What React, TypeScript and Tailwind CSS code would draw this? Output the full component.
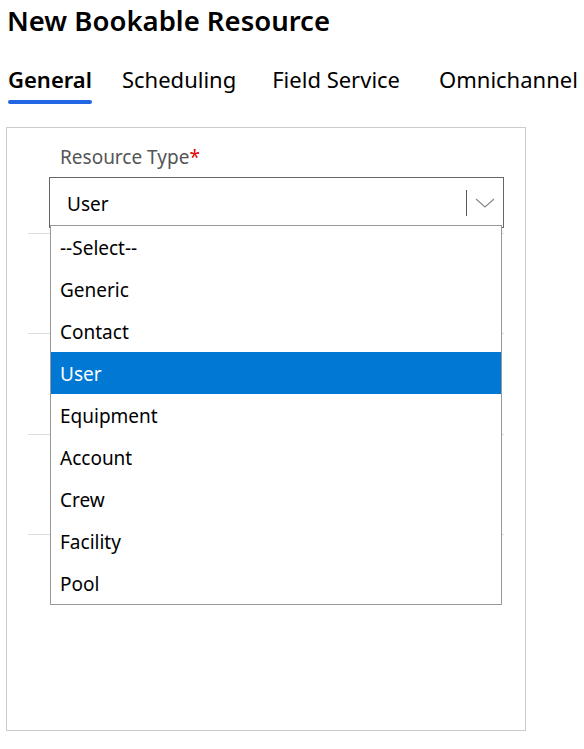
const TABS = [
  { label: "General", gap: "ml-0" },
  { label: "Scheduling", gap: "ml-[30px]" },
  { label: "Field Service", gap: "ml-[36px]" },
  { label: "Omnichannel", gap: "ml-[39px]" },
];

const OPTIONS = [
  "--Select--",
  "Generic",
  "Contact",
  "User",
  "Equipment",
  "Account",
  "Crew",
  "Facility",
  "Pool",
];

function Chevron() {
  return (
    <svg width="20" height="10" viewBox="0 0 20 10" fill="none">
      <path d="M1 1l9 8 9-8" stroke="#8a8a8a" strokeWidth="1.2" />
    </svg>
  );
}

export default function App() {
  const selected = "User";

  return (
    <div
      className="h-[749px] w-[584px] overflow-hidden bg-white text-black"
      style={{ fontFamily: '"Noto Sans", "Open Sans", sans-serif' }}
    >
      <h1 className="whitespace-nowrap pl-[7px] pt-[3px] text-[27.5px] font-semibold leading-[36px]">
        New Bookable Resource
      </h1>

      <div className="mt-[25px] flex whitespace-nowrap pl-[8px]">
        {TABS.map((tab, i) => (
          <div key={tab.label} className={`flex flex-col ${tab.gap}`}>
            <span
              className={
                i === 0
                  ? "text-[22px] font-semibold leading-[30px]"
                  : "text-[22px] leading-[30px]"
              }
            >
              {tab.label}
            </span>
            <span
              className={
                i === 0
                  ? "mt-[6px] h-[4px] rounded-full bg-[#2266e3]"
                  : "mt-[6px] h-[4px]"
              }
            />
          </div>
        ))}
      </div>

      <div className="relative ml-[6px] mt-[23px] h-[604px] w-[520px] border border-[#cccccc]">
        <div className="pl-[53px] pt-[17px] text-[19px] leading-[25px] text-[#555555]">
          Resource Type<span className="text-[#e00000]">*</span>
        </div>

        <div className="ml-[42px] mt-[7px] flex h-[51px] w-[455px] items-center border border-[#666666] pl-[17px]">
          <span className="flex-1 pt-[3px] text-[19px]">{selected}</span>
          <span className="h-[26px] w-px bg-[#555555]" />
          <span className="px-[8px]">
            <Chevron />
          </span>
        </div>

        <div className="ml-[21px] mt-[5px] flex w-[476px] flex-col">
          <div className="h-px bg-[#dddddd]" />
          <div className="mt-[99px] h-px bg-[#dddddd]" />
          <div className="mt-[100px] h-px bg-[#dddddd]" />
          <div className="mt-[99px] h-px bg-[#dddddd]" />
        </div>

        <ul className="absolute left-[43px] top-[97px] w-[452px] border border-[#999999] bg-white">
          {OPTIONS.map((opt) => (
            <li
              key={opt}
              className={
                opt === selected
                  ? "flex h-[42px] items-center bg-[#0078d4] pl-[9px] pt-[3px] text-[19px] text-white"
                  : "flex h-[42px] items-center pl-[9px] pt-[3px] text-[19px]"
              }
            >
              {opt}
            </li>
          ))}
        </ul>
      </div>
    </div>
  );
}
